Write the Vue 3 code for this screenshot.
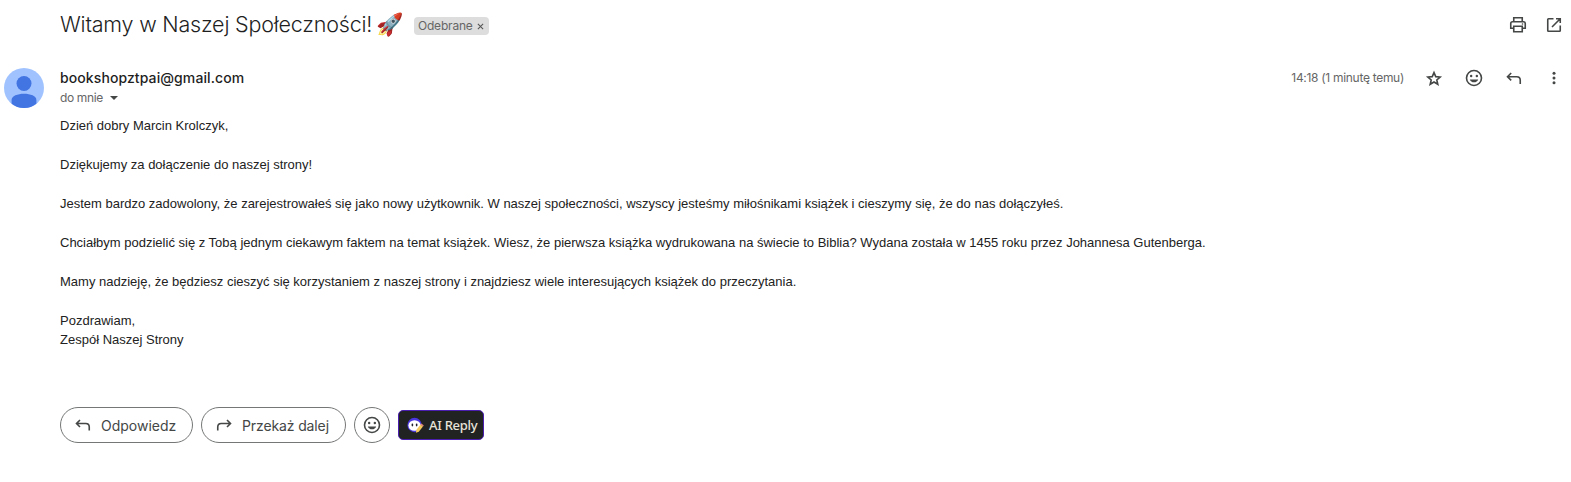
<script setup>
const lines = [
  'Dzień dobry Marcin Krolczyk,',
  '',
  'Dziękujemy za dołączenie do naszej strony!',
  '',
  'Jestem bardzo zadowolony, że zarejestrowałeś się jako nowy użytkownik. W naszej społeczności, wszyscy jesteśmy miłośnikami książek i cieszymy się, że do nas dołączyłeś.',
  '',
  'Chciałbym podzielić się z Tobą jednym ciekawym faktem na temat książek. Wiesz, że pierwsza książka wydrukowana na świecie to Biblia? Wydana została w 1455 roku przez Johannesa Gutenberga.',
  '',
  'Mamy nadzieję, że będziesz cieszyć się korzystaniem z naszej strony i znajdziesz wiele interesujących książek do przeczytania.',
  '',
  'Pozdrawiam,',
  'Zespół Naszej Strony',
]
</script>

<template>
  <main class="mail">
    <header class="subject-row">
      <h1 class="subject">Witamy w Naszej Społeczności!</h1>
      <span class="rocket">🚀</span>
      <span class="label">
        <span class="label-name">Odebrane</span>
        <svg class="label-close" viewBox="0 0 8 8"><path d="M1 1l6 6M7 1L1 7" /></svg>
      </span>
      <div class="page-tools">
        <svg class="icon" viewBox="0 0 20 20">
          <path d="M5.75 6.5V2.75h8.5V6.5M5.5 13.25H2.75V8.5q0-1.75 1.75-1.75h11q1.75 0 1.75 1.75v4.75H14.5M5.75 11.25h8.5v5.5h-8.5z" />
          <circle class="solid" cx="14.5" cy="9" r=".8" />
        </svg>
        <svg class="icon" viewBox="0 0 20 20">
          <path d="M9.5 3.75H4.5q-.75 0-.75.75v11q0 .75.75.75h11q.75 0 .75-.75v-5M12 3.75h4.25V8M16 4L8 12" />
        </svg>
      </div>
    </header>

    <section class="message">
      <svg class="avatar" viewBox="0 0 40 40">
        <circle class="avatar-bg" cx="20" cy="20" r="20" />
        <circle class="avatar-fg" cx="20" cy="15.5" r="7.5" />
        <path class="avatar-fg" d="M7.6 35.7V32c0-4.2 6-6.3 12.4-6.3S32.400 27.800 32.400 32v3.700A20 20 0 0 1 7.600 35.700z" />
      </svg>

      <div class="content">
        <div class="meta">
          <div class="sender">
            <div class="email">bookshopztpai@gmail.com</div>
            <div class="recipient">
              <span>do mnie</span>
              <svg class="caret" viewBox="0 0 8 4"><path d="M0 0h8L4 4z" /></svg>
            </div>
          </div>
          <time class="time">14:18 (1 minutę temu)</time>
          <div class="actions">
            <svg class="icon star" viewBox="0 0 20 20">
              <path d="M10 4.600l1.750 4.050 4.400.4-3.350 2.900 1 4.300L10 14l-3.800 2.250 1-4.300L3.850 9.050l4.400-.4z" />
            </svg>
            <svg class="icon" viewBox="0 0 20 20">
              <circle cx="10" cy="10" r="7.500" />
              <circle class="solid" cx="7.150" cy="8" r="1.200" />
              <circle class="solid" cx="12.850" cy="8" r="1.200" />
              <path class="solid" d="M5.800 11.400h8.400c-.6 1.800-2.200 2.900-4.200 2.900s-3.600-1.100-4.200-2.900z" />
            </svg>
            <svg class="icon" viewBox="0 0 20 20">
              <path d="M7.200 5L3.500 8.700l3.700 3.700M3.700 8.700h9.100q3.450 0 3.450 3.450V16" />
            </svg>
            <svg class="icon" viewBox="0 0 20 20">
              <circle class="solid" cx="10" cy="5.300" r="1.500" />
              <circle class="solid" cx="10" cy="10" r="1.500" />
              <circle class="solid" cx="10" cy="14.700" r="1.500" />
            </svg>
          </div>
        </div>

        <div class="body">
          <div v-for="(line, i) in lines" :key="i" class="line">{{ line }}</div>
        </div>

        <div class="replies">
          <button class="pill reply">
            <svg class="icon" viewBox="0 0 20 20">
              <path d="M7 5L3.500 8.500 7 12M3.700 8.500h9.100q3.450 0 3.450 3.450V15.500" />
            </svg>
            <span>Odpowiedz</span>
          </button>
          <button class="pill forward">
            <svg class="icon" viewBox="0 0 20 20">
              <path d="M13 5l3.500 3.500L13 12M16.300 8.500H7.200q-3.450 0-3.450 3.450V15.500" />
            </svg>
            <span>Przekaż dalej</span>
          </button>
          <button class="pill round">
            <svg class="icon" viewBox="0 0 20 20">
              <circle cx="10" cy="10" r="7.500" />
              <circle class="solid" cx="7.150" cy="8" r="1.200" />
              <circle class="solid" cx="12.850" cy="8" r="1.200" />
              <path class="solid" d="M5.800 11.400h8.400c-.6 1.800-2.200 2.900-4.200 2.900s-3.600-1.100-4.200-2.900z" />
            </svg>
          </button>
          <button class="ai">
            <svg class="bot" viewBox="0 0 18 18">
              <circle cx="8" cy="8.500" r="7.600" fill="#4a36e0" />
              <ellipse cx="8" cy="9" rx="6.500" ry="5.600" fill="#fff" />
              <ellipse cx="5.700" cy="8.500" rx=".9" ry="1.500" fill="#22222c" />
              <ellipse cx="10.200" cy="8.500" rx=".9" ry="1.500" fill="#22222c" />
              <path d="M10 13.600l4.400-5.600 2.500 2-4.400 5.600-3.100 1z" fill="#f5c95c" />
              <path d="M14.400 8l.9-1.100 2.500 2-.9 1.100z" fill="#e98a79" />
            </svg>
            <span>AI Reply</span>
          </button>
        </div>
      </div>
    </section>
  </main>
</template>

<style>
body {
  background: #fff;
}
</style>

<style scoped>
.mail {
  width: 1571px;
  height: 482px;
  box-sizing: border-box;
  overflow: hidden;
  background: #fff;
  color: #1f1f1f;
  font-family: Inter, 'Liberation Sans', sans-serif;
}
.icon {
  display: block;
  flex: none;
  width: 20px;
  height: 20px;
  fill: none;
  stroke: #444746;
  stroke-width: 1.6;
}
.solid {
  fill: #444746;
  stroke: none;
}
.subject-row {
  display: flex;
  align-items: center;
  height: 50px;
  padding: 0 7px 0 60px;
}
.subject {
  width: 316px;
  margin: 0 0 2px;
  font-size: 21.5px;
  font-weight: 300;
  line-height: 28px;
  letter-spacing: -0.2px;
  white-space: nowrap;
}
.rocket {
  width: 38px;
  margin-bottom: 2px;
  font-size: 22px;
  line-height: 28px;
}
.label {
  display: flex;
  align-items: center;
  justify-content: space-between;
  box-sizing: border-box;
  width: 75px;
  height: 18px;
  margin-top: 2px;
  padding: 0 5px 0 4px;
  border-radius: 4px;
  background: #ddd;
  color: #666;
}
.label-name {
  margin-bottom: 2px;
  font-size: 12px;
  letter-spacing: -0.2px;
}
.label-close {
  width: 7px;
  height: 7px;
  margin-top: 1px;
  fill: none;
  stroke: #555;
  stroke-width: 1.2;
}
.page-tools {
  display: flex;
  gap: 16px;
  margin-left: auto;
}
.message {
  display: flex;
  padding: 18px 7px 0 4px;
}
.avatar {
  flex: none;
  width: 40px;
  height: 40px;
  margin-right: 16px;
}
.avatar-bg {
  fill: #a0c3ff;
}
.avatar-fg {
  fill: #4274e2;
}
.content {
  flex: 1;
}
.meta {
  display: flex;
  align-items: flex-start;
  height: 48px;
}
.email {
  font-size: 14px;
  font-weight: 500;
  line-height: 20px;
  letter-spacing: 0.09px;
}
.recipient {
  display: flex;
  align-items: center;
  gap: 7px;
  color: #666;
  font-size: 12px;
  line-height: 20px;
  letter-spacing: -0.35px;
}
.caret {
  width: 8px;
  height: 4px;
  fill: #444746;
}
.time {
  margin-left: auto;
  color: #666;
  font-size: 12px;
  line-height: 20px;
  letter-spacing: -0.3px;
}
.actions {
  display: flex;
  gap: 20px;
  margin-left: 20px;
}
.body {
  height: 291px;
  color: #222;
  font-family: 'Liberation Sans', Arial, sans-serif;
  font-size: 13px;
  line-height: 19.5px;
  white-space: nowrap;
}
.line {
  height: 19.5px;
}
.line:last-child {
  margin-top: -1px;
}
.replies {
  display: flex;
  align-items: center;
  gap: 8px;
  height: 36px;
}
.pill {
  display: flex;
  align-items: center;
  box-sizing: border-box;
  height: 36px;
  padding: 0 0 0 12px;
  gap: 8px;
  border: 1px solid #747775;
  border-radius: 18px;
  background: #fff;
  color: #444746;
  font: 400 14px Inter, sans-serif;
  white-space: nowrap;
}
.reply {
  width: 133px;
}
.forward {
  width: 145px;
  letter-spacing: -0.12px;
}
.round {
  width: 36px;
  padding: 0 0 0 7px;
}
.ai {
  display: flex;
  align-items: center;
  gap: 5px;
  box-sizing: border-box;
  width: 86px;
  height: 30px;
  padding: 0 0 0 8px;
  border: 1px solid #4a1fb0;
  border-radius: 5px;
  background: #212323;
  color: #e8e4da;
  font: 500 13px 'Noto Sans', sans-serif;
  letter-spacing: -0.28px;
  white-space: nowrap;
}
.bot {
  flex: none;
  width: 17px;
  height: 17px;
}
</style>
